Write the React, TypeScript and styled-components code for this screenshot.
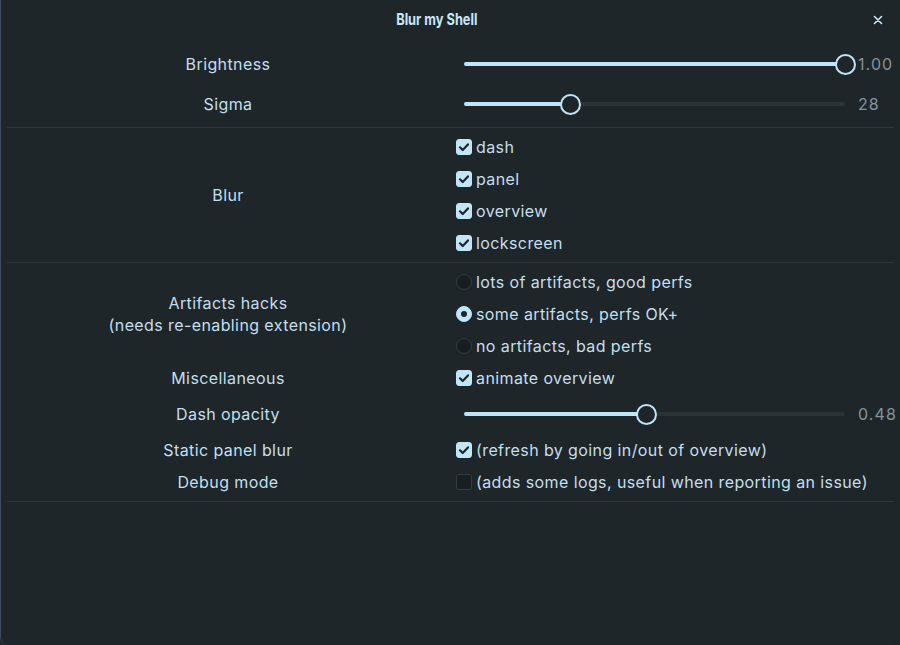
import React from "react";
import styled, { createGlobalStyle } from "styled-components";

const Global = createGlobalStyle`
  html, body { margin: 0; padding: 0; background: #1f2629; }
  body { font-family: Inter, "Noto Sans", sans-serif; }
  * { box-sizing: border-box; }
`;

const Window = styled.div`
  width: 900px;
  height: 645px;
  background: #1f2629;
  color: #c3dfee;
  font-family: Inter, "Noto Sans", sans-serif;
  font-size: 16px;
  letter-spacing: 0.4px;
  border-left: 1px solid #3c4a5c;
  border-bottom-left-radius: 8px;
  border-bottom-right-radius: 8px;
  display: flex;
  flex-direction: column;
  overflow: hidden;
`;

const Header = styled.header`
  height: 41px;
  display: flex;
  align-items: center;
  justify-content: center;
  position: relative;
  padding-right: 28px;
  padding-bottom: 3px;
`;

const Title = styled.h1`
  margin: 0;
  font-size: 16px;
  font-weight: 700;
  letter-spacing: 0;
  color: #c8e6f8;
  transform: scaleX(0.8);
`;

const Close = styled.button`
  position: absolute;
  right: 14px;
  top: 12px;
  width: 16px;
  height: 16px;
  padding: 0;
  border: none;
  background: transparent;
  display: flex;
  align-items: center;
  justify-content: center;
  cursor: pointer;
`;

const Section = styled.section`
  margin: 0 6px;
  padding: 3px 0;
  border-bottom: 1px solid #2f373b;
  display: flex;
  flex-direction: column;
`;

const Group = styled.div`
  display: grid;
  grid-template-columns: 442px 1fr;
`;

const Label = styled.div`
  display: flex;
  align-items: center;
  justify-content: center;
  text-align: center;
  line-height: 22px;
  color: #c3dfee;
`;

const Controls = styled.div`
  display: flex;
  flex-direction: column;
`;

const Item = styled.label<{ $h: number }>`
  height: ${(p) => p.$h}px;
  display: flex;
  align-items: center;
  gap: 4px;
  padding-left: 7px;
  color: #c3dfee;
  white-space: nowrap;
`;

const Box = styled.span<{ $on: boolean }>`
  width: 16px;
  height: 16px;
  border-radius: 3px;
  flex: none;
  display: flex;
  align-items: center;
  justify-content: center;
  background: ${(p) => (p.$on ? "#c3e5f8" : "#181e21")};
  border: 1px solid ${(p) => (p.$on ? "#c3e5f8" : "#343c40")};
`;

const Radio = styled.span<{ $on: boolean }>`
  width: 16px;
  height: 16px;
  border-radius: 50%;
  flex: none;
  display: flex;
  align-items: center;
  justify-content: center;
  background: ${(p) => (p.$on ? "#c3e5f8" : "#181e21")};
  border: 1px solid ${(p) => (p.$on ? "#c3e5f8" : "#343c40")};
  &::after {
    content: "";
    display: ${(p) => (p.$on ? "block" : "none")};
    width: 6px;
    height: 6px;
    border-radius: 50%;
    background: #1f2629;
  }
`;

const SliderRow = styled.div`
  height: 40px;
  display: flex;
  align-items: center;
  padding-left: 15px;
  gap: 13px;
`;

const Track = styled.div`
  flex: 1;
  height: 4px;
  border-radius: 2px;
  background: #2b3337;
  position: relative;
`;

const Fill = styled.div`
  position: absolute;
  left: 0;
  top: 0;
  bottom: 0;
  border-radius: 2px;
  background: #bfe3f7;
`;

const Knob = styled.div`
  position: absolute;
  top: 50%;
  width: 21px;
  height: 21px;
  margin-left: -10.5px;
  margin-top: -10.5px;
  border-radius: 50%;
  border: 2px solid #bfe3f7;
  background: #1f2629;
`;

const Value = styled.span`
  flex: none;
  width: 36px;
  white-space: nowrap;
  color: #84949c;
  letter-spacing: 1.1px;
`;

const Check = () => (
  <svg width="12" height="12" viewBox="0 0 12 12">
    <path d="M2 6.3 L4.7 9 L10 3.4" fill="none" stroke="#1f2629" strokeWidth="2.2" strokeLinecap="round" strokeLinejoin="round" />
  </svg>
);

const CheckItem = ({ on, text }: { on: boolean; text: string }) => (
  <Item $h={32}>
    <Box $on={on}>{on && <Check />}</Box>
    {text}
  </Item>
);

const RadioItem = ({ on, text }: { on: boolean; text: string }) => (
  <Item $h={32}>
    <Radio $on={on} />
    {text}
  </Item>
);

const Slider = ({ frac, value }: { frac: number; value: string }) => (
  <SliderRow>
    <Track>
      <Fill style={{ width: `${frac * 100}%` }} />
      <Knob style={{ left: `${frac * 100}%` }} />
    </Track>
    <Value>{value}</Value>
  </SliderRow>
);

export default function App() {
  return (
    <>
      <Global />
      <Window>
        <Header>
          <Title>Blur my Shell</Title>
          <Close aria-label="close">
            <svg width="10" height="10" viewBox="0 0 10 10">
              <path d="M1.5 1.5 L8.5 8.5 M8.5 1.5 L1.5 8.5" stroke="#c8e6f8" strokeWidth="1.6" strokeLinecap="round" />
            </svg>
          </Close>
        </Header>

        <Section>
          <Group>
            <Label>Brightness</Label>
            <Controls>
              <Slider frac={1} value="1.00" />
            </Controls>
          </Group>
          <Group>
            <Label>Sigma</Label>
            <Controls>
              <Slider frac={0.28} value="28" />
            </Controls>
          </Group>
        </Section>

        <Section>
          <Group>
            <Label>Blur</Label>
            <Controls>
              <CheckItem on text="dash" />
              <CheckItem on text="panel" />
              <CheckItem on text="overview" />
              <CheckItem on text="lockscreen" />
            </Controls>
          </Group>
        </Section>

        <Section>
          <Group>
            <Label>
              Artifacts hacks
              <br />
              (needs re-enabling extension)
            </Label>
            <Controls>
              <RadioItem on={false} text="lots of artifacts, good perfs" />
              <RadioItem on text="some artifacts, perfs OK+" />
              <RadioItem on={false} text="no artifacts, bad perfs" />
            </Controls>
          </Group>
          <Group>
            <Label>Miscellaneous</Label>
            <Controls>
              <CheckItem on text="animate overview" />
            </Controls>
          </Group>
          <Group>
            <Label>Dash opacity</Label>
            <Controls>
              <Slider frac={0.48} value="0.48" />
            </Controls>
          </Group>
          <Group>
            <Label>Static panel blur</Label>
            <Controls>
              <CheckItem on text="(refresh by going in/out of overview)" />
            </Controls>
          </Group>
          <Group>
            <Label>Debug mode</Label>
            <Controls>
              <CheckItem on={false} text="(adds some logs, useful when reporting an issue)" />
            </Controls>
          </Group>
        </Section>
      </Window>
    </>
  );
}
